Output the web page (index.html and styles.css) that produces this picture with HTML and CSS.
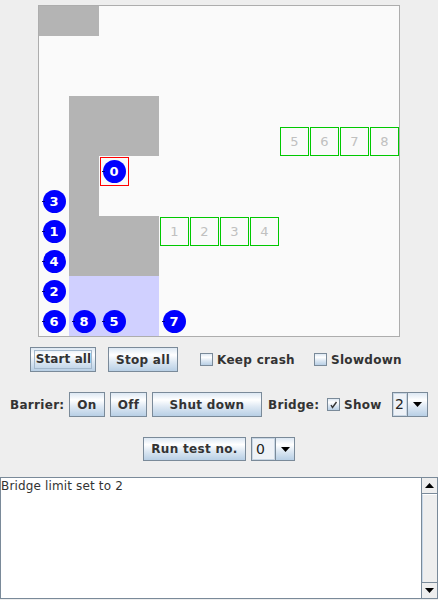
FILE: index.html
```html
<!DOCTYPE html>
<html>
<head>
<meta charset="utf-8">
<link rel="stylesheet" href="styles.css">
</head>
<body>
<div class="board">
  <div class="grid">
    <div class="wall w1"></div>
    <div class="wall w2"></div>
    <div class="wall w3"></div>
    <div class="wall w4"></div>
    <div class="zone"></div>

    <div class="slot s1">1</div>
    <div class="slot s2">2</div>
    <div class="slot s3">3</div>
    <div class="slot s4">4</div>
    <div class="slot s5">5</div>
    <div class="slot s6">6</div>
    <div class="slot s7">7</div>
    <div class="slot s8">8</div>

    <div class="mark m0"></div>

    <div class="cell k0"><div class="car">0</div></div>
    <div class="cell k3"><div class="car">3</div></div>
    <div class="cell k1"><div class="car">1</div></div>
    <div class="cell k4"><div class="car">4</div></div>
    <div class="cell k2"><div class="car">2</div></div>
    <div class="cell k6"><div class="car">6</div></div>
    <div class="cell k8"><div class="car">8</div></div>
    <div class="cell k5"><div class="car">5</div></div>
    <div class="cell k7"><div class="car">7</div></div>
  </div>
</div>

<div class="row r1">
  <button class="btn b-start"><span class="focus">Start all</span></button>
  <button class="btn b-stop">Stop all</button>
  <label class="chk g-keep"><span class="box"></span><span class="lbl">Keep crash</span></label>
  <label class="chk g-slow"><span class="box"></span><span class="lbl">Slowdown</span></label>
</div>

<div class="row r2">
  <span class="lbl l-barrier">Barrier:</span>
  <button class="btn b-on">On</button>
  <button class="btn b-off">Off</button>
  <button class="btn b-shut">Shut down</button>
  <span class="lbl l-bridge">Bridge:</span>
  <label class="chk g-show"><span class="box"><svg width="11" height="11" viewBox="0 0 11 11"><path d="M3 6 L4.5 8.5 L8.5 3" fill="none" stroke="#333" stroke-width="1.4"/></svg></span><span class="lbl">Show</span></label>
  <div class="combo c-bridge"><span class="val">2</span><span class="arrow"><svg width="9" height="5" viewBox="0 0 9 5"><path d="M0 0 H9 L4.5 5 Z" fill="#000"/></svg></span></div>
</div>

<div class="row r3">
  <button class="btn b-run">Run test no.</button>
  <div class="combo c-test"><span class="val">0</span><span class="arrow"><svg width="9" height="5" viewBox="0 0 9 5"><path d="M0 0 H9 L4.5 5 Z" fill="#000"/></svg></span></div>
</div>

<div class="log">
  <div class="log-text">Bridge limit set to 2</div>
  <div class="sbar">
    <div class="sbtn up"><svg width="9" height="5" viewBox="0 0 9 5"><path d="M0 5 H9 L4.5 0 Z" fill="#000"/></svg></div>
    <div class="thumb"></div>
    <div class="sbtn down"><svg width="9" height="5" viewBox="0 0 9 5"><path d="M0 0 H9 L4.5 5 Z" fill="#000"/></svg></div>
  </div>
</div>
</body>
</html>
```

FILE: styles.css
```css
* { box-sizing: border-box; }

body {
  margin: 0;
  width: 438px;
  height: 600px;
  overflow: hidden;
  background: #eeeeee;
  font-family: "DejaVu Sans", sans-serif;
  font-size: 12px;
  color: #333333;
}

/* ---------- board ---------- */
.board {
  margin: 5px 0 0 38px;
  width: 362px;
  height: 332px;
  border: 1px solid #adadad;
  background: #fafafa;
}

.grid {
  display: grid;
  grid-template-columns: repeat(12, 30px);
  grid-template-rows: repeat(11, 30px);
}

.wall { background: #b4b4b4; }
.w1 { grid-column: 1 / 3; grid-row: 1 / 2; }
.w2 { grid-column: 2 / 5; grid-row: 4 / 6; }
.w3 { grid-column: 2 / 3; grid-row: 6 / 8; }
.w4 { grid-column: 2 / 5; grid-row: 8 / 10; }
.zone { background: #d0d0ff; grid-column: 2 / 5; grid-row: 10 / 12; }

.slot {
  margin: 1px 0 0 1px;
  width: 29px;
  height: 29px;
  border: 1px solid #00c800;
  color: #c0c0c0;
  font-size: 13px;
  display: flex;
  align-items: center;
  justify-content: center;
}
.s1 { grid-column: 5; grid-row: 8; }
.s2 { grid-column: 6; grid-row: 8; }
.s3 { grid-column: 7; grid-row: 8; }
.s4 { grid-column: 8; grid-row: 8; }
.s5 { grid-column: 9; grid-row: 5; }
.s6 { grid-column: 10; grid-row: 5; }
.s7 { grid-column: 11; grid-row: 5; }
.s8 { grid-column: 12; grid-row: 5; }

.mark {
  margin: 1px 0 0 1px;
  width: 29px;
  height: 29px;
  border: 1px solid #ff0000;
}
.m0 { grid-column: 3; grid-row: 6; }

.cell {
  display: flex;
  align-items: center;
  justify-content: center;
}
.k0 { grid-column: 3; grid-row: 6; }
.k3 { grid-column: 1; grid-row: 7; }
.k1 { grid-column: 1; grid-row: 8; }
.k4 { grid-column: 1; grid-row: 9; }
.k2 { grid-column: 1; grid-row: 10; }
.k6 { grid-column: 1; grid-row: 11; }
.k8 { grid-column: 2; grid-row: 11; }
.k5 { grid-column: 3; grid-row: 11; }
.k7 { grid-column: 5; grid-row: 11; }

.car {
  position: relative;
  width: 23px;
  height: 23px;
  border-radius: 50%;
  background: #0000ff;
  color: #ffffff;
  font-weight: bold;
  font-size: 13px;
  display: flex;
  align-items: center;
  justify-content: center;
}
.car::before {
  content: "";
  position: absolute;
  left: -1px;
  top: 11px;
  width: 3px;
  height: 1px;
  background: #00007a;
}

/* ---------- controls ---------- */
.row {
  display: flex;
  align-items: center;
}
.r1 { margin-top: 10px; height: 25px; padding-left: 30px; }
.r2 { margin-top: 20px; height: 25px; padding-left: 10px; }
.r3 { margin-top: 20px; height: 24px; padding-left: 143px; }

.btn {
  height: 100%;
  margin: 0;
  padding: 0;
  border: 1px solid #7a8a99;
  background: linear-gradient(to bottom, #dde8f3 0%, #ffffff 30%, #dde8f3 60%, #b8cfe5 100%);
  font-family: inherit;
  font-size: 12px;
  font-weight: bold;
  letter-spacing: 0.3px;
  color: #333333;
  display: flex;
  align-items: center;
  justify-content: center;
}
.focus {
  border: 1px solid #a3b8cc;
  padding: 1px 0 2px 1px;
  line-height: 14px;
  letter-spacing: 0.1px;
}
.b-start { width: 66px; margin-right: 12px; }
.b-stop { width: 70px; }
.b-on { width: 36px; margin-right: 5px; }
.b-off { width: 37px; margin-right: 5px; }
.b-shut { width: 110px; }
.b-run { width: 103px; margin-right: 5px; }

.lbl { font-weight: bold; white-space: nowrap; letter-spacing: 0.3px; }
.l-barrier { width: 59px; }
.l-bridge { width: 59px; margin-left: 6px; }

.chk {
  display: flex;
  align-items: center;
}
.box {
  width: 13px;
  height: 13px;
  border: 1px solid #7a8a99;
  background: linear-gradient(to bottom, #dde8f3 0%, #ffffff 30%, #dde8f3 60%, #b8cfe5 100%);
  margin-right: 4px;
  display: flex;
  align-items: center;
  justify-content: center;
}
.g-keep { margin-left: 22px; width: 114px; }
.g-show { width: 65px; }

.combo {
  height: 100%;
  display: flex;
  border: 1px solid #7a8a99;
}
.val {
  background: #eef2f7;
  border: 1px solid #c8d6e4;
  font-size: 14px;
  color: #222222;
  line-height: 20px;
  padding-left: 1px;
}
.arrow {
  flex: 1;
  border-left: 1px solid #7a8a99;
  background: linear-gradient(to bottom, #dde8f3 0%, #ffffff 30%, #dde8f3 60%, #b8cfe5 100%);
  display: flex;
  align-items: center;
  justify-content: center;
}
.c-bridge { width: 36px; }
.c-bridge .val { width: 14px; }
.c-test { width: 44px; }
.c-test .val { width: 23px; padding-left: 3px; }

/* ---------- log ---------- */
.log {
  margin-top: 16px;
  width: 438px;
  height: 122px;
  border: 1px solid #7a8a99;
  display: flex;
}
.log-text {
  flex: 1;
  background: #ffffff;
  padding-top: 1px;
  font-size: 12px;
  line-height: 14px;
  letter-spacing: 0.15px;
  color: #333333;
}
.sbar {
  width: 16px;
  border-left: 1px solid #7a8a99;
  background: #eeeeee;
  display: flex;
  flex-direction: column;
}
.sbtn {
  height: 16px;
  display: flex;
  align-items: center;
  justify-content: center;
  background: #eeeeee;
}
.up { border-bottom: 1px solid #7a8a99; }
.down { border-top: 1px solid #7a8a99; }
.thumb {
  flex: 1;
  border-top: 1px solid #ffffff;
  border-left: 1px solid #c8d8e8;
  background: #eeeeee;
}
```
